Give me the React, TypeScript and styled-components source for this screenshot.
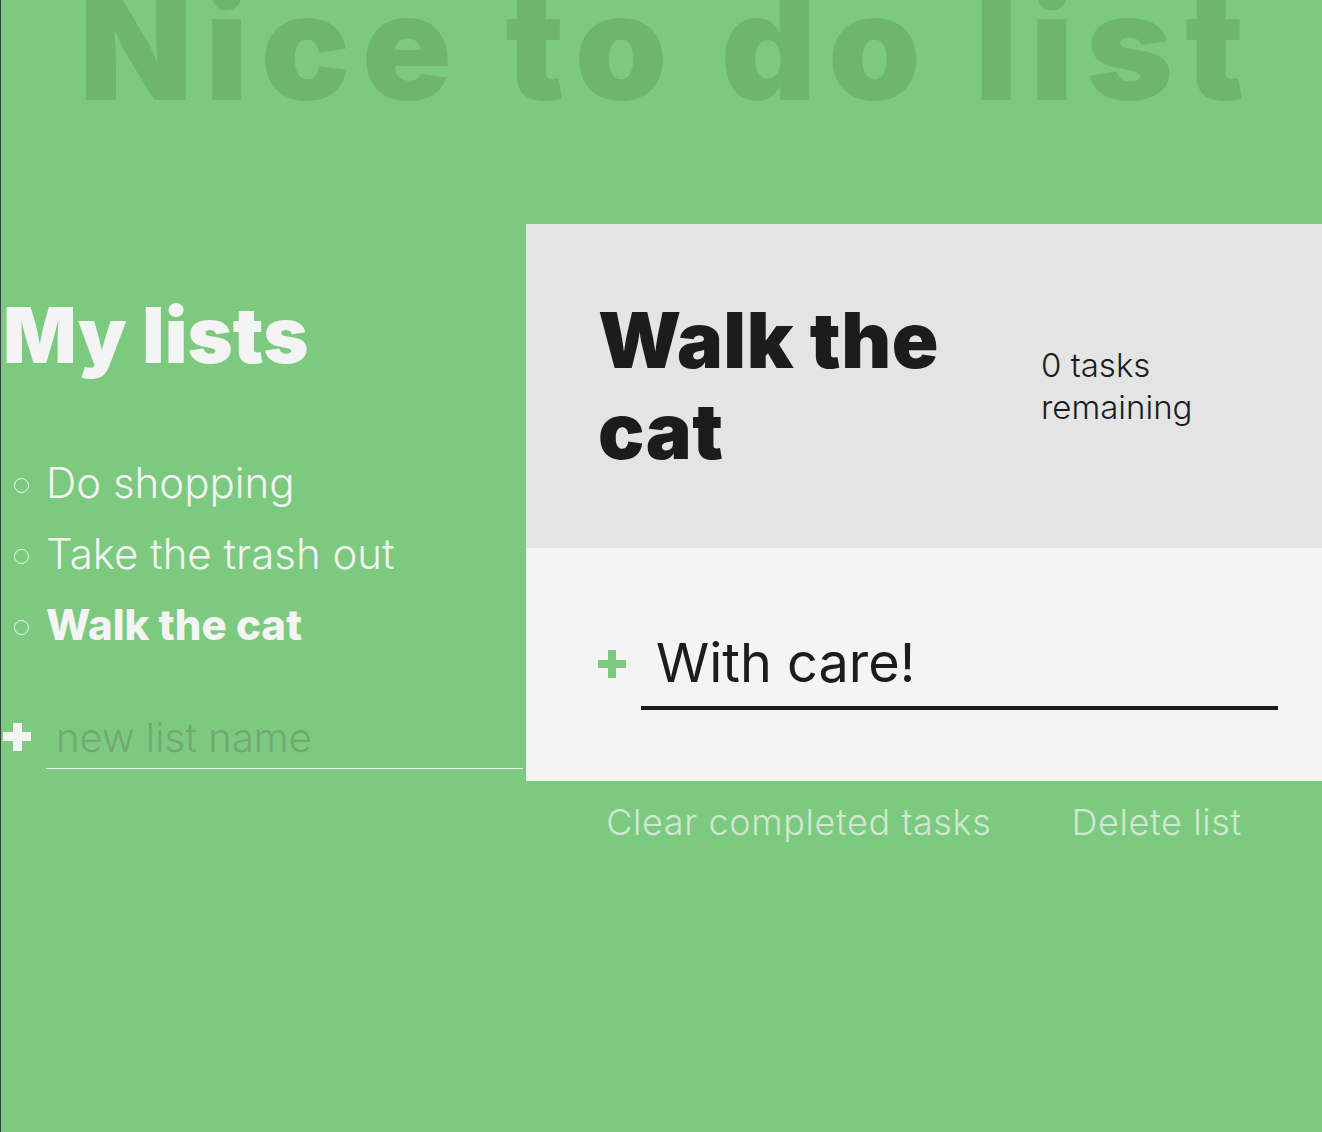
import React from "react";
import styled, { createGlobalStyle } from "styled-components";

const GlobalStyle = createGlobalStyle`
  html, body { margin: 0; padding: 0; }
  body {
    font-family: Inter, "Noto Sans", "Liberation Sans", sans-serif;
    background: #7bca7f;
    overflow: hidden;
  }
  * { box-sizing: border-box; }
`;

const Page = styled.div`
  display: flow-root;
  min-height: 1132px;
  background: #7bca7f;
  border-left: 1px solid #3b3a47;
  color: #f4f4f4;
  font-weight: 300;
`;

const Title = styled.h1`
  margin: -27px 0 103px;
  padding-left: 12px;
  font-size: 148px;
  line-height: 1;
  font-weight: 900;
  letter-spacing: 12px;
  text-align: center;
  color: rgba(0, 0, 0, 0.1);
  white-space: nowrap;
`;

const Main = styled.main`
  display: grid;
  grid-template-columns: 525px 796px;
  align-items: start;
`;

const Aside = styled.section`
  padding: 0 3px 0 0;
`;

const ListsHeading = styled.h2`
  margin: 69px 0 0 2px;
  font-size: 77px;
  line-height: 1.1;
  font-weight: 900;
  color: #f4f4f4;
`;

const Lists = styled.ul`
  list-style: none;
  margin: 69px 0 0;
  padding: 0;
`;

const ListItem = styled.li<{ $active?: boolean }>`
  display: flex;
  align-items: center;
  font-size: 42px;
  line-height: 71px;
  font-weight: ${(p) => (p.$active ? 800 : 300)};
  &::before {
    content: "";
    width: 13px;
    height: 13px;
    border: 1.5px solid #f4f4f4;
    border-radius: 50%;
    margin: 6px 17px 0 13px;
    flex: none;
  }
`;

const Form = styled.form<{ $offset: number }>`
  display: flex;
  align-items: center;
  margin-top: ${(p) => p.$offset}px;
`;

const PlusButton = styled.button<{ $color: string; $thick: number; $lift: number; $left: number }>`
  position: relative;
  flex: none;
  width: 28px;
  height: 28px;
  padding: 0;
  border: 0;
  background: transparent;
  cursor: pointer;
  margin-left: ${(p) => p.$left}px;
  margin-bottom: ${(p) => p.$lift}px;
  &::before,
  &::after {
    content: "";
    position: absolute;
    background: ${(p) => p.$color};
  }
  &::before {
    left: 0;
    right: 0;
    top: calc(50% - ${(p) => p.$thick / 2}px);
    height: ${(p) => p.$thick}px;
  }
  &::after {
    top: 0;
    bottom: 0;
    left: calc(50% - ${(p) => p.$thick / 2}px);
    width: ${(p) => p.$thick}px;
  }
`;

const ListInput = styled.input`
  flex: 1;
  min-width: 0;
  margin-left: 15px;
  height: 56px;
  padding: 0 10px 6px;
  border: 0;
  border-bottom: 1px solid #f4f4f4;
  background: transparent;
  color: #f4f4f4;
  font-family: inherit;
  font-size: 40px;
  font-weight: 300;
  outline: none;
  &::placeholder {
    color: rgba(100, 110, 100, 0.38);
  }
`;

const Column = styled.div`
  display: flex;
  flex-direction: column;
`;

const Panel = styled.section`
  background: #f4f4f4;
  color: #1c1c1c;
`;

const PanelHeader = styled.header`
  height: 324px;
  background: #e4e4e4;
  padding: 0 0 0 72px;
  display: grid;
  grid-template-columns: 443px 180px;
  align-items: center;
`;

const ListTitle = styled.h2`
  margin: 0;
  max-width: 380px;
  font-size: 77px;
  line-height: 91px;
  font-weight: 900;
  letter-spacing: 0.5px;
`;

const TaskCount = styled.p`
  margin: 0;
  font-size: 33px;
  line-height: 42px;
  font-weight: 300;
`;

const PanelBody = styled.div`
  padding: 90px 44px 71px 72px;
`;

const TaskInput = styled.input`
  flex: 1;
  min-width: 0;
  margin-left: 15px;
  height: 72px;
  padding: 0 15px 20px;
  border: 0;
  border-bottom: 4px solid #1c1c1c;
  background: transparent;
  color: #1c1c1c;
  font-family: inherit;
  font-size: 54px;
  font-weight: 400;
  outline: none;
`;

const DeleteRow = styled.div`
  display: flex;
  justify-content: space-evenly;
  padding-top: 19px;
`;

const DeleteButton = styled.button`
  border: 0;
  padding: 0;
  background: transparent;
  color: #f4f4f4;
  opacity: 0.7;
  font-family: inherit;
  font-size: 36px;
  letter-spacing: 0.6px;
  font-weight: 300;
  cursor: pointer;
`;

export default function App() {
  const lists = ["Do shopping", "Take the trash out", "Walk the cat"];
  return (
    <Page>
      <GlobalStyle />
      <Title>Nice to do list</Title>
      <Main>
        <Aside>
          <ListsHeading>My lists</ListsHeading>
          <Lists>
            {lists.map((name, i) => (
              <ListItem key={name} $active={i === 2}>
                {name}
              </ListItem>
            ))}
          </Lists>
          <Form $offset={53} onSubmit={(e) => e.preventDefault()}>
            <PlusButton aria-label="create new list" $color="#f4f4f4" $thick={9} $lift={8} $left={2} />
            <ListInput type="text" placeholder="new list name" aria-label="new list name" />
          </Form>
        </Aside>
        <Column>
          <Panel>
            <PanelHeader>
              <ListTitle>Walk the cat</ListTitle>
              <TaskCount>0 tasks remaining</TaskCount>
            </PanelHeader>
            <PanelBody>
              <Form $offset={0} onSubmit={(e) => e.preventDefault()}>
                <PlusButton aria-label="create new task" $color="#7bca7f" $thick={8} $lift={20} $left={0} />
                <TaskInput type="text" defaultValue="With care!" aria-label="new task name" />
              </Form>
            </PanelBody>
          </Panel>
          <DeleteRow>
            <DeleteButton>Clear completed tasks</DeleteButton>
            <DeleteButton>Delete list</DeleteButton>
          </DeleteRow>
        </Column>
      </Main>
    </Page>
  );
}
